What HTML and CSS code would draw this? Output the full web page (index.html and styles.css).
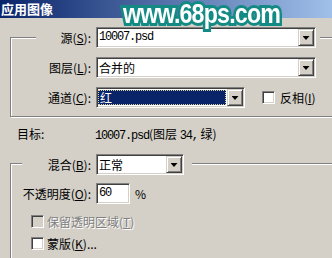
FILE: index.html
```html
<!DOCTYPE html>
<html lang="zh-CN">
<head>
    <meta charset="UTF-8">
    <meta name="viewport" content="width=device-width, initial-scale=1.0">
    <title>应用图像</title>
    <link rel="stylesheet" href="styles.css">
</head>
<body>

<div class="window">
    <div class="titlebar">应用图像</div>
    <div class="watermark">www.68ps.com</div>

    <div class="group group-source">
        <div class="row head">
            <label class="lbl lbl-head">源(<u>S</u>):</label>
            <div class="combo w-wide"><span class="val mono">10007.psd</span><span class="drop"></span></div>
        </div>
        <div class="row">
            <label class="lbl">图层(<u>L</u>):</label>
            <div class="combo w-wide"><span class="val">合并的</span><span class="drop"></span></div>
        </div>
        <div class="row">
            <label class="lbl">通道(<u>C</u>):</label>
            <div class="combo w-mid focused"><span class="val"><span class="sel">红</span></span><span class="drop"></span></div>
            <span class="check invert"></span>
            <span class="check-text">反相(<u>I</u>)</span>
        </div>
    </div>

    <div class="target">
        <span class="target-lbl">目标:</span>
        <span class="target-val"><span class="mono">10007.psd</span>(图层 <span class="mono">34,</span> 绿)</span>
    </div>

    <div class="group group-blend">
        <div class="row head">
            <label class="lbl lbl-head">混合(<u>B</u>):</label>
            <div class="combo w-blend"><span class="val">正常</span><span class="drop"></span></div>
        </div>
        <div class="row row-opacity">
            <label class="lbl">不透明度(<u>O</u>):</label>
            <div class="field"><span class="mono">60</span></div>
            <span class="pct">%</span>
        </div>
        <div class="opt">
            <span class="check disabled"></span>
            <span class="opt-text dim">保留透明区域(<u>T</u>)</span>
        </div>
        <div class="opt">
            <span class="check"></span>
            <span class="opt-text">蒙版(<u>K</u>)...</span>
        </div>
    </div>
</div>

</body>
</html>
```

FILE: styles.css
```css
body {
    margin: 0;
    background-color: #d4d0c8;
}
.window {
    position: relative;
    width: 332px;
    height: 258px;
    overflow: hidden;
    background-color: #d4d0c8;
    font-family: "Noto Sans CJK SC", sans-serif;
    font-size: 12px;
    line-height: 14px;
    color: #000;
}
.titlebar {
    height: 18px;
    line-height: 18px;
    padding-left: 1px;
    color: #fff;
    font-size: 13px;
    font-weight: bold;
    background: linear-gradient(to right, #0a246a, #a0c0ea);
}
/* site watermark stamped over the dialog */
.watermark {
    position: absolute;
    left: 123px;
    top: 0;
    font-family: "Liberation Sans", sans-serif;
    font-size: 28px;
    font-weight: bold;
    line-height: 28px;
    letter-spacing: -1px;
    color: #fff;
    -webkit-text-stroke: 6px #148a84;
    paint-order: stroke fill;
    transform: scaleX(0.83);
    transform-origin: left top;
    white-space: nowrap;
}
u {
    text-decoration: underline;
    text-underline-offset: 1px;
}
.mono {
    font-family: "Liberation Mono", monospace;
    font-size: 12px;
    letter-spacing: -1.2px;
}

/* etched group boxes */
.group {
    margin-left: 10px;
    width: 340px;
    border: 1px solid #808080;
    box-shadow: inset 1px 1px 0 #fff, 1px 1px 0 #fff;
}
.group-source {
    margin-top: 19px;
    padding-bottom: 8px;
}
.group-blend {
    margin-top: 20px;
    height: 200px;
}
.row {
    display: flex;
    align-items: center;
    margin-top: 9px;
}
.head {
    width: fit-content;
    background-color: #d4d0c8;
}
.group-source .head {
    margin-top: -11px;
    margin-left: 25px;
    padding-right: 4px;
}
.group-blend .head {
    margin-top: -10px;
    margin-left: 11px;
    padding-right: 8px;
}
.lbl {
    width: 85px;
    padding-right: 5px;
    box-sizing: border-box;
    text-align: right;
    white-space: nowrap;
}
.group-source .lbl-head {
    width: 60px;
}
.group-blend .lbl-head {
    width: 74px;
}
.row-opacity {
    margin-top: 8px;
}

/* combo boxes */
.combo,
.field {
    display: flex;
    height: 21px;
    box-sizing: border-box;
    padding: 1px;
    border: 1px solid;
    border-color: #808080 #fff #fff #808080;
    box-shadow: inset 1px 1px 0 #404040, inset -1px -1px 0 #d4d0c8;
    background-color: #fff;
}
.w-wide {
    width: 220px;
}
.w-mid {
    width: 149px;
}
.w-blend {
    width: 88px;
}
.val {
    flex: 1;
    padding-left: 1px;
    line-height: 17px;
    white-space: nowrap;
}
.focused .val {
    padding: 1px 1px 1px 0;
}
.sel {
    display: block;
    height: 15px;
    box-sizing: border-box;
    padding-left: 1px;
    line-height: 13px;
    border: 1px dotted #d8d4a0;
    background-color: #0a246a;
    color: #fff;
}
.drop {
    display: flex;
    align-items: center;
    justify-content: center;
    width: 16px;
    height: 17px;
    box-sizing: border-box;
    padding-top: 1px;
    border: 1px solid;
    border-color: #d4d0c8 #404040 #404040 #d4d0c8;
    box-shadow: inset 1px 1px 0 #fff, inset -1px -1px 0 #808080;
    background-color: #d4d0c8;
}
.drop::after {
    content: "";
    width: 7px;
    height: 4px;
    background-color: #000;
    clip-path: polygon(0 0, 100% 0, 50% 100%);
}
.field {
    width: 34px;
    padding-left: 2px;
    line-height: 17px;
}
.pct {
    margin-left: 5px;
}

/* check boxes */
.check {
    width: 13px;
    height: 13px;
    box-sizing: border-box;
    border: 1px solid;
    border-color: #808080 #fff #fff #808080;
    box-shadow: inset 1px 1px 0 #404040, inset -1px -1px 0 #d4d0c8;
    background-color: #fff;
}
.check.disabled {
    background-color: #d4d0c8;
}
.invert {
    margin-left: 17px;
}
.check-text {
    margin-left: 5px;
}
.opt {
    display: flex;
    align-items: center;
    margin-left: 20px;
    margin-top: 11px;
    height: 13px;
}
.opt + .opt {
    margin-top: 9px;
}
.opt-text {
    margin-left: 3px;
}
.dim {
    color: #808080;
    text-shadow: 1px 1px 0 #fff;
}

.target {
    display: flex;
    margin-top: 10px;
    padding-left: 17px;
}
.target-lbl {
    width: 78px;
}
```
